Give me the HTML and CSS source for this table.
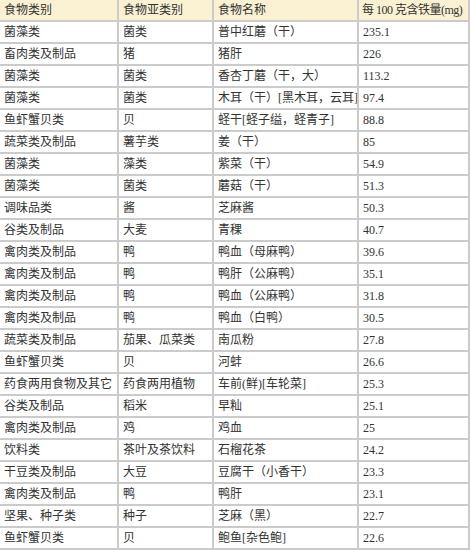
FILE: index.html
```html
<!DOCTYPE html>
<html lang="zh-CN">
<head>
<meta charset="utf-8">
<title>食物含铁量</title>
<link rel="stylesheet" href="styles.css">
</head>
<body>
<div class="table" role="table">
  <div class="cell head">食物类别</div><div class="cell head">食物亚类别</div><div class="cell head">食物名称</div><div class="cell head tight">每 100 克含铁量(mg)</div>
  <div class="cell">菌藻类</div><div class="cell">菌类</div><div class="cell">普中红蘑（干）</div><div class="cell">235.1</div>
  <div class="cell">畜肉类及制品</div><div class="cell">猪</div><div class="cell">猪肝</div><div class="cell">226</div>
  <div class="cell">菌藻类</div><div class="cell">菌类</div><div class="cell">香杏丁蘑（干，大）</div><div class="cell">113.2</div>
  <div class="cell">菌藻类</div><div class="cell">菌类</div><div class="cell">木耳（干）[黑木耳，云耳]</div><div class="cell">97.4</div>
  <div class="cell">鱼虾蟹贝类</div><div class="cell">贝</div><div class="cell">蛏干[蛏子缢，蛏青子]</div><div class="cell">88.8</div>
  <div class="cell">蔬菜类及制品</div><div class="cell">薯芋类</div><div class="cell">姜（干）</div><div class="cell">85</div>
  <div class="cell">菌藻类</div><div class="cell">藻类</div><div class="cell">紫菜（干）</div><div class="cell">54.9</div>
  <div class="cell">菌藻类</div><div class="cell">菌类</div><div class="cell">蘑菇（干）</div><div class="cell">51.3</div>
  <div class="cell">调味品类</div><div class="cell">酱</div><div class="cell">芝麻酱</div><div class="cell">50.3</div>
  <div class="cell">谷类及制品</div><div class="cell">大麦</div><div class="cell">青稞</div><div class="cell">40.7</div>
  <div class="cell">禽肉类及制品</div><div class="cell">鸭</div><div class="cell">鸭血（母麻鸭）</div><div class="cell">39.6</div>
  <div class="cell">禽肉类及制品</div><div class="cell">鸭</div><div class="cell">鸭肝（公麻鸭）</div><div class="cell">35.1</div>
  <div class="cell">禽肉类及制品</div><div class="cell">鸭</div><div class="cell">鸭血（公麻鸭）</div><div class="cell">31.8</div>
  <div class="cell">禽肉类及制品</div><div class="cell">鸭</div><div class="cell">鸭血（白鸭）</div><div class="cell">30.5</div>
  <div class="cell">蔬菜类及制品</div><div class="cell">茄果、瓜菜类</div><div class="cell">南瓜粉</div><div class="cell">27.8</div>
  <div class="cell">鱼虾蟹贝类</div><div class="cell">贝</div><div class="cell">河蚌</div><div class="cell">26.6</div>
  <div class="cell">药食两用食物及其它</div><div class="cell">药食两用植物</div><div class="cell">车前(鲜)[车轮菜]</div><div class="cell">25.3</div>
  <div class="cell">谷类及制品</div><div class="cell">稻米</div><div class="cell">早籼</div><div class="cell">25.1</div>
  <div class="cell">禽肉类及制品</div><div class="cell">鸡</div><div class="cell">鸡血</div><div class="cell">25</div>
  <div class="cell">饮料类</div><div class="cell">茶叶及茶饮料</div><div class="cell">石榴花茶</div><div class="cell">24.2</div>
  <div class="cell">干豆类及制品</div><div class="cell">大豆</div><div class="cell">豆腐干（小香干）</div><div class="cell">23.3</div>
  <div class="cell">禽肉类及制品</div><div class="cell">鸭</div><div class="cell">鸭肝</div><div class="cell">23.1</div>
  <div class="cell">坚果、种子类</div><div class="cell">种子</div><div class="cell">芝麻（黑）</div><div class="cell">22.7</div>
  <div class="cell">鱼虾蟹贝类</div><div class="cell">贝</div><div class="cell">鲍鱼[杂色鲍]</div><div class="cell">22.6</div>
</div>
</body>
</html>
```

FILE: styles.css
```css
html, body {
  margin: 0;
  padding: 0;
  background: #ffffff;
}

.table {
  width: 470px;
  height: 550px;
  box-sizing: border-box;
  display: grid;
  grid-template-columns: 117px 93px 143px 109px;
  grid-template-rows: repeat(25, 20px);
  column-gap: 2px;
  row-gap: 2px;
  padding: 0 2px 2px 0;
  background: #cbcbcb;
  font-family: "Liberation Serif", "Noto Sans CJK SC", serif;
  font-size: 12px;
  color: #333333;
}

.cell {
  background: #ffffff;
  display: flex;
  align-items: center;
  padding-left: 4px;
  white-space: nowrap;
  overflow: hidden;
  line-height: 1;
}

.head {
  background: #faf1d3;
}

.tight {
  padding-left: 3px;
  letter-spacing: -0.5px;
}
```
